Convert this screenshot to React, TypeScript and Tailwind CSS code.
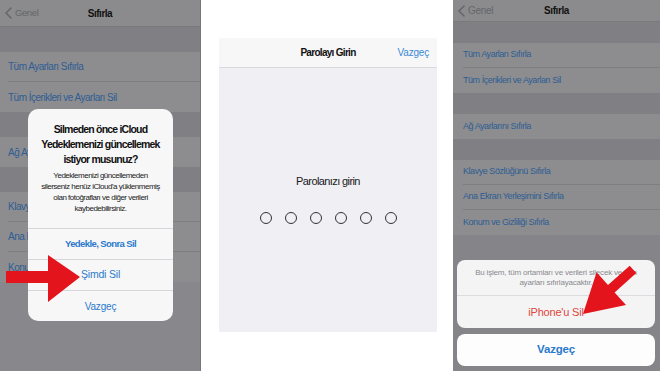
import React from 'react'

const FONT = "font-['Liberation_Sans',Arial,sans-serif]"

function Chevron({ className }: { className?: string }) {
  return (
    <svg width="7" height="12" viewBox="0 0 7 12" className={className}>
      <path d="M6 1 1 6l5 5" fill="none" stroke="currentColor" strokeWidth="1.5" strokeLinecap="round" strokeLinejoin="round" />
    </svg>
  )
}

// first screen: settings list with the iCloud alert
function ResetAlertScreen() {
  const row = 'h-[30px] bg-[#8d8d8f] pl-[8px] flex text-[10px] tracking-[-0.5px] text-[#2d5d93]'
  return (
    <div className="relative w-[201px] h-full bg-[#88888c] border-r border-[#75757a] overflow-hidden">
      <div className="grid grid-cols-[1fr_auto_1fr] items-center h-[27px] bg-[#8b8b8d] border-b border-[#7a7a7d]">
        <div className="flex items-center gap-[3px] pl-[5px] text-[#65656a]">
          <Chevron />
          <span className="text-[9.5px] tracking-[-0.4px]">Genel</span>
        </div>
        <span className="text-[10px] tracking-[-0.5px] font-bold text-[#111]">Sıfırla</span>
        <span />
      </div>
      <div className="h-[25px] bg-[#808084]" />
      <div className={row}>
        <div className="flex-1 flex items-center border-b border-[#7e7e82]">Tüm Ayarları Sıfırla</div>
      </div>
      <div className={row}>
        <div className="flex-1 flex items-center">Tüm İçerikleri ve Ayarları Sil</div>
      </div>
      <div className="h-[25px] bg-[#808084]" />
      <div className={row}>
        <div className="flex-1 flex items-center">Ağ Ayarlarını Sıfırla</div>
      </div>
      <div className="h-[25px] bg-[#808084]" />
      <div className={row}>
        <div className="flex-1 flex items-center border-b border-[#7e7e82]">Klavye Sözlüğünü Sıfırla</div>
      </div>
      <div className={row}>
        <div className="flex-1 flex items-center border-b border-[#7e7e82]">Ana Ekran Yerleşimini Sıfırla</div>
      </div>
      <div className={row}>
        <div className="flex-1 flex items-center">Konum ve Gizliliği Sıfırla</div>
      </div>

      {/* alert */}
      <div className="absolute left-[28px] top-[109px] w-[145px] rounded-[10px] bg-[#f7f7f8] text-center overflow-hidden">
        <div className="px-[5px] pt-[13px] pb-[14px]">
          <p className="text-[10.5px] leading-[15px] tracking-[-0.8px] font-bold text-[#111]">
            Silmeden önce iCloud
            <br />
            Yedeklemenizi güncellemek
            <br />
            istiyor musunuz?
          </p>
          <p className="mt-[3px] text-[8px] leading-[11px] tracking-[-0.5px] text-[#222]">
            Yedeklemenizi güncellemeden
            <br />
            silerseniz henüz iCloud'a yüklenmemiş
            <br />
            olan fotoğrafları ve diğer verileri
            <br />
            kaybedebilirsiniz.
          </p>
        </div>
        <div className="h-[31px] flex items-center justify-center border-t border-[#d6d6da] text-[9.5px] tracking-[-0.6px] font-bold text-[#2b79cc]">
          Yedekle, Sonra Sil
        </div>
        <div className="h-[31px] flex items-center justify-center border-t border-[#d6d6da] text-[10.5px] tracking-[-0.2px] text-[#2b79cc]">
          Şimdi Sil
        </div>
        <div className="h-[31px] flex items-center justify-center border-t border-[#d6d6da] text-[10px] tracking-[-0.2px] text-[#2b79cc]">
          Vazgeç
        </div>
      </div>

      <svg className="absolute inset-0 pointer-events-none" width="201" height="371" viewBox="0 0 201 371">
        <polygon points="6,271 48,271 48,255 80,277 48,302 48,283 6,283" fill="#e3141b" />
      </svg>
    </div>
  )
}

// second screen: passcode entry
function PasscodeScreen() {
  return (
    <div className="w-[252px] h-full bg-white pl-[18px] pr-[16px] pt-[38px]">
      <div className="h-[294px] bg-[#efeff4] flex flex-col">
        <div className="grid grid-cols-[1fr_auto_1fr] items-center h-[30px] bg-[#f7f7f8] border-b border-[#d8d8dc]">
          <span />
          <span className="text-[10px] tracking-[-0.7px] font-bold text-[#111]">Parolayı Girin</span>
          <span className="justify-self-end pr-[8px] text-[10px] tracking-[-0.2px] text-[#3a8ad6]">Vazgeç</span>
        </div>
        <div className="flex flex-col items-center pt-[106px]">
          <p className="text-[11px] leading-[14px] tracking-[-0.6px] text-[#1a1a1a]">Parolanızı girin</p>
          <div className="mt-[24px] flex gap-[13px]">
            {[0, 1, 2, 3, 4, 5].map((i) => (
              <div key={i} className="w-[12px] h-[12px] rounded-full border border-[#333]" />
            ))}
          </div>
        </div>
      </div>
    </div>
  )
}

// third screen: action sheet
function EraseSheetScreen() {
  const row = 'h-[25px] bg-[#8d8d8f] pl-[10px] flex text-[9px] tracking-[-0.45px] text-[#2d5d93]'
  return (
    <div className="relative w-[207px] h-full bg-[#858589] overflow-hidden">
      <div className="grid grid-cols-[1fr_auto_1fr] items-center h-[22px] bg-[#8b8b8d] border-b border-[#7a7a7d]">
        <div className="flex items-center gap-[3px] pl-[5px] text-[#65656a]">
          <Chevron />
          <span className="text-[10px] tracking-[-0.3px]">Genel</span>
        </div>
        <span className="text-[10px] tracking-[-0.4px] font-bold text-[#111]">Sıfırla</span>
        <span />
      </div>
      <div className="h-[21px] bg-[#808084]" />
      <div className={row}>
        <div className="flex-1 flex items-center border-b border-[#7e7e82]">Tüm Ayarları Sıfırla</div>
      </div>
      <div className={row}>
        <div className="flex-1 flex items-center">Tüm İçerikleri ve Ayarları Sil</div>
      </div>
      <div className="h-[21px] bg-[#808084]" />
      <div className={row}>
        <div className="flex-1 flex items-center">Ağ Ayarlarını Sıfırla</div>
      </div>
      <div className="h-[21px] bg-[#808084]" />
      <div className={row}>
        <div className="flex-1 flex items-center border-b border-[#7e7e82]">Klavye Sözlüğünü Sıfırla</div>
      </div>
      <div className={row}>
        <div className="flex-1 flex items-center border-b border-[#7e7e82]">Ana Ekran Yerleşimini Sıfırla</div>
      </div>
      <div className={row}>
        <div className="flex-1 flex items-center">Konum ve Gizliliği Sıfırla</div>
      </div>

      {/* action sheet */}
      <div className="absolute left-[4px] right-[5px] bottom-[5px] flex flex-col gap-[6px] text-center">
        <div className="rounded-[8px] bg-[#f4f4f5] overflow-hidden">
          <p className="h-[36px] pt-[8px] text-[8px] leading-[10px] tracking-[-0.2px] text-[#8a8a8e] border-b border-[#dcdce0]">
            Bu işlem, tüm ortamları ve verileri silecek ve tüm
            <br />
            ayarları sıfırlayacaktır.
          </p>
          <div className="h-[32px] flex items-center justify-center text-[11px] tracking-[-0.2px] text-[#e0453c]">iPhone'u Sil</div>
        </div>
        <div className="h-[32px] rounded-[8px] bg-[#fdfdfd] flex items-center justify-center text-[11.5px] tracking-[-0.2px] font-bold text-[#2b79cc]">
          Vazgeç
        </div>
      </div>

      <svg className="absolute inset-0 pointer-events-none" width="207" height="371" viewBox="0 0 207 371">
        <polygon points="130,314 173,305 161.6,292.4 183.3,273.1 176.7,265.7 155,285 143.6,272.3" fill="#e3141b" />
      </svg>
    </div>
  )
}

export default function App() {
  return (
    <div className={`flex w-[660px] h-[371px] bg-white overflow-hidden ${FONT}`}>
      <ResetAlertScreen />
      <PasscodeScreen />
      <EraseSheetScreen />
    </div>
  )
}
